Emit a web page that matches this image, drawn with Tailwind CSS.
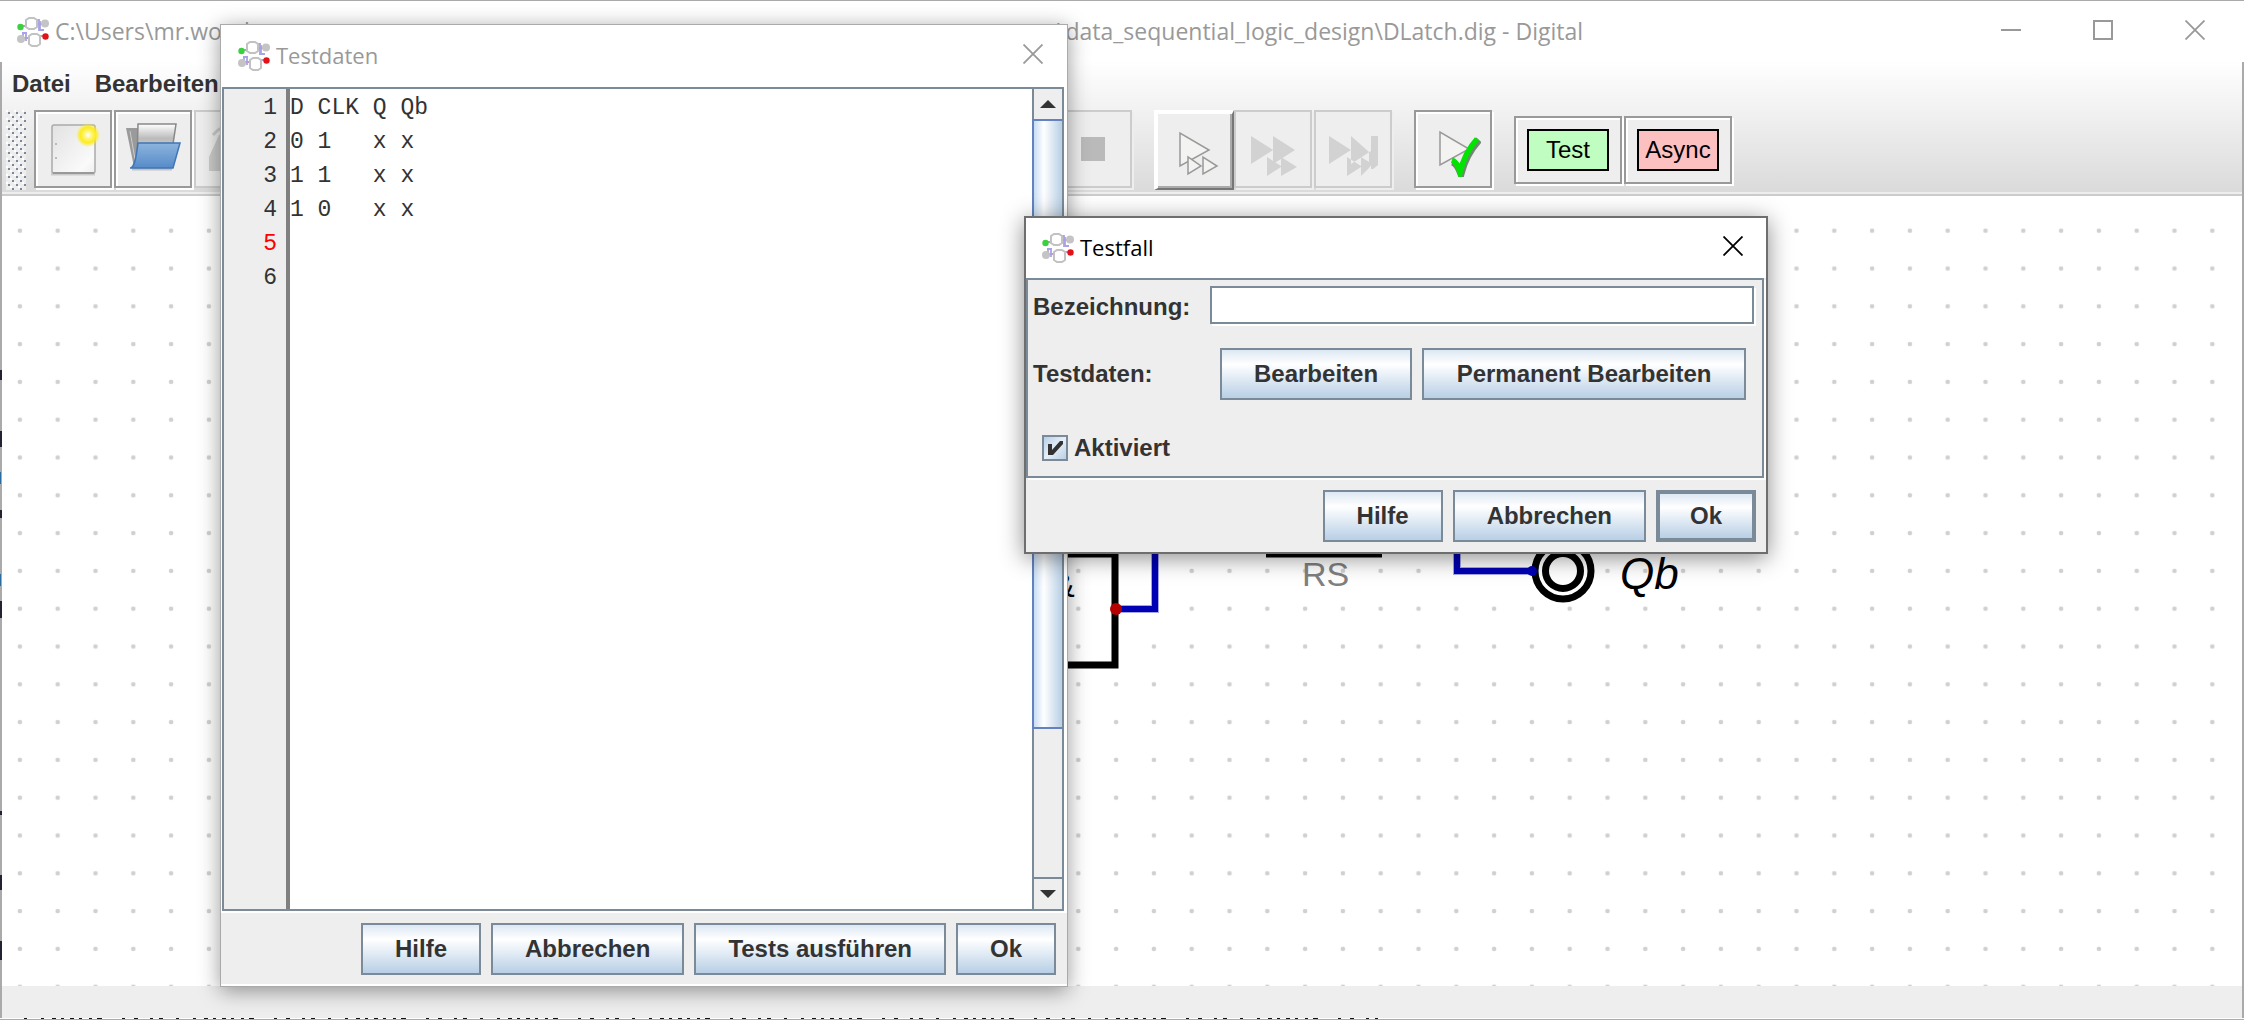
<!DOCTYPE html>
<html lang="de">
<head>
<meta charset="utf-8">
<title>DLatch.dig - Digital</title>
<script src="https://cdn.jsdelivr.net/npm/@tailwindcss/browser@4"></script>
</head>
<body class="relative flex h-screen flex-col overflow-hidden border-t border-[#aaa] bg-white font-['Liberation_Sans',sans-serif] text-2xl text-[#333]">

<svg class="hidden" aria-hidden="true">
  <defs>
    <symbol id="logo" viewBox="0 0 32 32">
      <path d="M5 10h8M21 8h5M5 22h7M20 20h8" stroke="#a77bb0" stroke-width="1.6" fill="none"/>
      <path d="M19 4h3v11M23 5v9h4M6 16v8M9 17v8M5 17h5" stroke="#a9a2e6" stroke-width="1.8" fill="none"/>
      <path d="M12 2h5l3 2v7l-3 2h-5l-3-2V4z" fill="#fff" stroke="#c2c2c2" stroke-width="2"/>
      <path d="M15 18h5l3 2v8l-3 2h-5l-3-2v-8z" fill="#fff" stroke="#c2c2c2" stroke-width="2"/>
      <circle cx="28" cy="7.500" r="4" fill="#c4c4c4"/>
      <circle cx="4" cy="23" r="4" fill="#c4c4c4"/>
      <circle cx="3.500" cy="11" r="3.200" fill="#3ad03f"/>
      <circle cx="28.500" cy="20.500" r="3.200" fill="#e0121a"/>
    </symbol>
    <symbol id="close" viewBox="0 0 20 20">
      <path d="M0.500 0.500l19 19M19.500 0.500l-19 19" stroke="currentColor" stroke-width="1.800" fill="none"/>
    </symbol>
  </defs>
</svg>

<!-- main window title bar -->
<header class="flex h-[61px] shrink-0 items-center pl-[17px] pr-[39px] font-['Open_Sans',sans-serif] text-[23px] text-[#999]">
  <svg class="mr-[6px] size-8 shrink-0"><use href="#logo"/></svg>
  <h1 class="flex flex-1 whitespace-nowrap"><span class="w-[1002px] overflow-hidden">C:\Users\mr.wood</span><span>\data_sequential_logic_design\DLatch.dig - Digital</span></h1>
  <div class="flex items-center gap-[72px] pb-1">
    <button aria-label="Minimieren" class="h-5"><svg class="h-5 w-5"><path d="M0 10h20" stroke="#999" stroke-width="2"/></svg></button>
    <button aria-label="Maximieren" class="h-5"><svg class="h-5 w-5"><path d="M1 1h18v18H1z" fill="none" stroke="#999" stroke-width="2"/></svg></button>
    <button aria-label="Schließen" class="h-5"><svg class="h-5 w-5"><use href="#close"/></svg></button>
  </div>
</header>

<div class="flex min-h-0 flex-1 flex-col border-x-2 border-[#aaa]">
  <div class="shrink-0 border-b-2 border-[#ccc] bg-linear-to-b from-white to-[#dadada]">
    <nav class="flex h-12 items-center gap-6 px-[10px] pb-1 font-bold">
      <button>Datei</button><button>Bearbeiten</button>
    </nav>
    <div class="flex h-[84px] items-start border-b-2 border-[#eee] pl-1" role="toolbar">
      <svg class="mr-2 h-20 w-5 shrink-0"><defs><pattern id="grip" width="8" height="8" patternUnits="userSpaceOnUse"><path d="M2 2h2v2H2zM6 6h2v2H6z" fill="#7a8a99"/><path d="M0 0h2v2H0zM4 4h2v2H4z" fill="#fff"/></pattern></defs><rect width="20" height="80" fill="#eee"/><rect width="20" height="80" fill="url(#grip)"/></svg>
      <button aria-label="Neu" class="mr-[2px] grid size-[78px] shrink-0 place-items-center border-2 border-[#999] bg-[#eee] shadow-[inset_2px_2px_0_#fff,2px_2px_0_#fff]">
        <svg class="size-14" viewBox="0 0 56 56"><defs><linearGradient id="pg" x2="1" y2="1"><stop stop-color="#e2e2e2"/><stop offset=".8" stop-color="#fafafa"/><stop offset="1" stop-color="#eee"/></linearGradient><radialGradient id="sun"><stop offset="0" stop-color="#fff"/><stop offset=".35" stop-color="#fff46b"/><stop offset=".65" stop-color="#fdec1e"/><stop offset="1" stop-color="#fdec1e" stop-opacity="0"/></radialGradient></defs>
          <path d="M6 53h44" stroke="#999" stroke-width="3" opacity=".4"/><rect x="7" y="4" width="43" height="48" rx="2" fill="url(#pg)" stroke="#aaa" stroke-width="1.500"/><path d="M8 52h41" stroke="#999" stroke-width="2"/><path d="M11 22v2M11 36v2" stroke="#bbb" stroke-width="2"/><circle cx="43" cy="14" r="12" fill="url(#sun)"/></svg>
      </button>
      <button aria-label="Öffnen" class="mr-[2px] grid size-[78px] shrink-0 place-items-center border-2 border-[#999] bg-[#eee] shadow-[inset_2px_2px_0_#fff,2px_2px_0_#fff]">
        <svg class="size-14" viewBox="0 0 56 56"><defs><linearGradient id="bl" x2="0" y2="1"><stop stop-color="#8db4de"/><stop offset="1" stop-color="#568bc9"/></linearGradient><linearGradient id="pp" x2="0" y2="1"><stop stop-color="#fff"/><stop offset=".4" stop-color="#bbb"/><stop offset="1" stop-color="#ddd"/></linearGradient></defs>
          <path d="M1 7h12l4 36-8 3z" fill="#9a9a9a"/><path d="M5 10l6 34" stroke="#ccc"/><path d="M13 3h38l-3 20-33 2-3 14z" fill="url(#pp)" stroke="#888" stroke-width="1.500"/><path d="M7 48h40" stroke="#999" stroke-width="3" opacity=".5"/><path d="M13 22h42l-7 25H5c4 0 6-8 8-25z" fill="url(#bl)" stroke="#3f76b5" stroke-width="1.500"/></svg>
      </button>
      <button disabled aria-label="Speichern" class="grid size-[78px] shrink-0 place-items-center border-2 border-[#ccc] bg-[#eee]">
        <svg class="size-14" viewBox="0 0 56 56"><path d="M4 50V36L14 14h28l10 22v14z" fill="#ccc"/><path d="M8 14Q16 4 28 4" stroke="#ccc" stroke-width="3" fill="none"/></svg>
      </button>
      <div class="w-[782px] shrink-0"></div>
      <button disabled aria-label="Stopp" class="mr-[22px] grid size-[78px] shrink-0 place-items-center border-2 border-[#ccc] bg-[#eee] shadow-[2px_2px_0_#eee]">
        <svg class="size-6"><rect width="24" height="24" fill="#bababa"/></svg>
      </button>
      <button aria-label="Gatterschritt" class="grid size-20 shrink-0 place-items-center border-2 border-t-4 border-l-4 border-t-white border-l-white border-r-[#777] border-b-[#777] bg-[#eee] shadow-[inset_-2px_-2px_0_#aaa]">
        <svg class="size-14" viewBox="0 0 56 56"><g fill="#f3f3f1" stroke="#999" stroke-width="1.500"><path d="M13 10v33l29-16z"/><path d="M21 34v17l13-8z"/><path d="M36 34v17l14-8z"/></g></svg>
      </button>
      <button disabled aria-label="Schritte" class="mr-[2px] grid size-[78px] shrink-0 place-items-center border-2 border-[#ccc] bg-[#eee] shadow-[2px_2px_0_#eee]">
        <svg class="size-14" viewBox="0 0 56 56"><path d="M6 15v28l22-14v14l22-14-22-14v14zM22 36v19l14-9v9l16-9-16-10v9z" fill="#d2d2d2"/></svg>
      </button>
      <button disabled aria-label="Bis zum Ende" class="mr-[22px] grid size-[78px] shrink-0 place-items-center border-2 border-[#ccc] bg-[#eee] shadow-[2px_2px_0_#eee]">
        <svg class="size-14" viewBox="0 0 56 56"><path d="M4 15v28l22-14v14l20-13v14l-2 3-8 8v-9l-14 9V36l14 9v-9l8 5V31L26 15v14zM46 15h7v29l-5 4h-2z" fill="#d2d2d2"/></svg>
      </button>
      <button aria-label="Tests starten" class="mr-[22px] grid size-[78px] shrink-0 place-items-center border-2 border-[#999] bg-[#eee] shadow-[inset_2px_2px_0_#fff,2px_2px_0_#fff]">
        <svg class="size-14" viewBox="0 0 56 56"><path d="M15 11v33l29-16z" fill="#f3f3f1" stroke="#999" stroke-width="1.500"/><path d="M27 41q5 1 9 12 5-20 18-34" fill="none" stroke="#456645" stroke-width="7" opacity=".75"/><path d="M27 39q5 2 8 12 5-20 17-33" fill="none" stroke="#00e400" stroke-width="5.500"/></svg>
      </button>
      <button class="mt-[6px] mr-[2px] grid h-[68px] w-[108px] shrink-0 place-items-center border-2 border-[#999] bg-[#eee] text-black shadow-[inset_2px_2px_0_#fff,2px_2px_0_#fff]"><span class="grid h-[42px] w-[82px] place-items-center border-2 border-black bg-[#c0fdc0]">Test</span></button>
      <button class="mt-[6px] grid h-[68px] w-[108px] shrink-0 place-items-center border-2 border-[#999] bg-[#eee] text-black shadow-[inset_2px_2px_0_#fff,2px_2px_0_#fff]"><span class="grid h-[42px] w-[82px] place-items-center border-2 border-black bg-[#fdc0c0]">Async</span></button>
    </div>
  </div>

  <!-- circuit canvas -->
  <main class="min-h-0 flex-1">
    <svg class="block h-full w-full" role="img" aria-label="Schaltung">
      <defs><pattern id="dots" x="-1" y="15.800" width="37.800" height="37.800" patternUnits="userSpaceOnUse"><circle cx="18.900" cy="18.900" r="2.300" fill="#d0d0d0"/></pattern></defs>
      <rect width="100%" height="100%" fill="url(#dots)"/>
      <g transform="translate(-2 -196)" fill="none">
        <path d="M1000 554H1115V665H1000M1266 554H1382" stroke="#000" stroke-width="7"/>
        <path d="M1116 609H1155V540M1457 540V571H1532" stroke="#a6a6e4" stroke-width="8"/>
        <path d="M1116 609H1155V540M1457 540V571H1532" stroke="#0000b4" stroke-width="6"/>
        <circle cx="1116" cy="609" r="6" fill="#b40000"/>
        <circle cx="1563" cy="571" r="28" fill="#fff" stroke="#000" stroke-width="7"/>
        <circle cx="1563" cy="571" r="17.500" stroke="#000" stroke-width="7"/>
        <circle cx="1532" cy="571" r="5" fill="#0000b4"/>
        <text x="1052" y="597" font-size="34" fill="#000">&amp;</text>
        <text x="1302" y="586" font-size="34" fill="#808080">RS</text>
        <text x="1620" y="589" font-size="44" font-style="italic" fill="#000">Qb</text>
      </g>
    </svg>
  </main>
  <footer class="h-8 shrink-0 bg-[#eee]"></footer>
</div>
<div class="h-[2px] shrink-0 border-b border-[#aaa]"><svg class="block h-px w-full"><path d="M24 .5H1378" stroke="#111" stroke-dasharray="3 14 3 8 4 5 3 6 4 5 3 7 3 5 5 20 3 9 4 12 3 6 4 13"/></svg></div>

<!-- edge of the window behind -->
<svg class="absolute top-0 left-0 h-full w-[2px]"><g fill="#222233"><path d="M0 369h2v10H0zM0 430h2v16H0zM0 509h2v8H0zM0 600h2v17H0zM0 810h2v4H0zM0 874h2v15H0zM0 940h2v19H0z"/><path d="M0 471h1v12H0zM0 573h1v12H0z" fill="#2a6ba0"/></g></svg>

<!-- test data dialog -->
<section aria-labelledby="t1" class="absolute top-[23px] left-[220px] flex h-[963px] w-[848px] flex-col border border-[#aaa] bg-white shadow-[0_4px_20px_rgb(0_0_0/0.4)]">
  <header class="flex h-[62px] shrink-0 items-center pr-[24px] pl-[17px] font-['Open_Sans',sans-serif] text-[22px] text-[#999]">
    <svg class="mr-[6px] size-8"><use href="#logo"/></svg><h2 id="t1" class="flex-1">Testdaten</h2>
    <button aria-label="Schließen" class="mb-1 h-5"><svg class="size-5"><use href="#close"/></svg></button>
  </header>
  <div class="mr-[3px] ml-px flex min-h-0 flex-1 border-2 border-[#7a8a99]">
    <ol class="w-[66px] border-r-4 border-[#808080] bg-[#eee] pt-[2px] pr-[9px] text-right font-['Liberation_Mono',monospace] text-[23px] leading-[34px]">
      <li>1</li><li>2</li><li>3</li><li>4</li><li class="text-[#f00]">5</li><li>6</li>
    </ol>
    <textarea aria-label="Testdaten" spellcheck="false" class="flex-1 resize-none overflow-hidden pt-[2px] font-['Liberation_Mono',monospace] text-[23px] leading-[34px] outline-none">D CLK Q Qb
0 1   x x
1 1   x x
1 0   x x
</textarea>
    <div class="flex w-[30px] flex-col border-l-2 border-[#7a8a99] bg-[#eee]">
      <button aria-label="Nach oben" class="grid h-[30px] place-items-center"><svg class="h-2 w-4"><path d="M8 0l8 8H0z" fill="#333"/></svg></button>
      <div class="-ml-[2px] h-[610px] border-2 border-r-0 border-[#6382bf] bg-linear-to-r from-[#c8ddf2] via-white via-35% to-[#b8cfe5]"></div>
      <div class="flex-1"></div>
      <button aria-label="Nach unten" class="grid h-8 place-items-center border-t-2 border-[#7a8a99]"><svg class="h-2 w-4"><path d="M0 0h16l-8 8z" fill="#333"/></svg></button>
    </div>
  </div>
  <div class="flex h-[75px] shrink-0 items-center justify-end gap-[10px] border-y-2 border-white bg-[#eee] pr-[11px] font-bold">
    <button class="h-[52px] border-2 border-[#7a8a99] bg-linear-to-b from-[#dde8f3] via-white via-30% to-[#b8cfe5] px-8">Hilfe</button>
    <button class="h-[52px] border-2 border-[#7a8a99] bg-linear-to-b from-[#dde8f3] via-white via-30% to-[#b8cfe5] px-8">Abbrechen</button>
    <button class="h-[52px] border-2 border-[#7a8a99] bg-linear-to-b from-[#dde8f3] via-white via-30% to-[#b8cfe5] px-8">Tests ausführen</button>
    <button class="h-[52px] border-2 border-[#7a8a99] bg-linear-to-b from-[#dde8f3] via-white via-30% to-[#b8cfe5] px-8">Ok</button>
  </div>
</section>

<!-- test case dialog -->
<section aria-labelledby="t2" class="absolute top-[215px] left-[1024px] flex h-[338px] w-[744px] flex-col border-2 border-[#6e6e6e] bg-[#eee] shadow-[0_4px_22px_rgb(0_0_0/0.45)]">
  <header class="flex h-[60px] shrink-0 items-center bg-white pr-[23px] pl-4 font-['Open_Sans',sans-serif] text-[22px] text-black">
    <svg class="mr-[6px] size-8"><use href="#logo"/></svg><h2 id="t2" class="flex-1">Testfall</h2>
    <button aria-label="Schließen" class="mb-1 h-5"><svg class="size-5"><use href="#close"/></svg></button>
  </header>
  <form class="mr-[2px] flex h-[200px] shrink-0 flex-col border-2 border-[#7a8a99] pr-2 pl-[5px] font-bold shadow-[2px_2px_0_#fff]">
    <div class="mt-[6px] flex h-[38px] items-center"><label for="bez" class="w-[177px] pt-1">Bezeichnung:</label><input id="bez" type="text" class="h-[38px] min-w-0 flex-1 border-2 border-[#7a8a99] bg-white px-1 font-normal shadow-[2px_2px_0_#fff] outline-none"></div>
    <div class="mt-6 flex items-center gap-[10px] pr-2"><span class="w-[177px]">Testdaten:</span>
      <button type="button" class="h-[52px] border-2 border-[#7a8a99] bg-linear-to-b from-[#dde8f3] via-white via-30% to-[#b8cfe5] px-8">Bearbeiten</button>
      <button type="button" class="h-[52px] flex-1 border-2 border-[#7a8a99] bg-linear-to-b from-[#dde8f3] via-white via-30% to-[#b8cfe5]">Permanent Bearbeiten</button>
    </div>
    <label class="mt-8 ml-[9px] flex items-center gap-[6px]">
      <span class="grid size-[26px]"><input type="checkbox" checked class="col-start-1 row-start-1 size-[26px] appearance-none border-2 border-[#7a8a99] bg-linear-to-br from-[#b8cfe5] via-[#e6eff8] to-[#b8cfe5]"><svg class="pointer-events-none col-start-1 row-start-1 size-[26px]"><path d="M6 9h4v6l8-9h3v3L11 20H6z" fill="#333"/></svg></span>Aktiviert</label>
  </form>
  <div class="flex flex-1 items-center justify-end gap-[10px] pt-[2px] pr-[10px] font-bold">
    <button class="h-[52px] border-2 border-[#7a8a99] bg-linear-to-b from-[#dde8f3] via-white via-30% to-[#b8cfe5] px-8">Hilfe</button>
    <button class="h-[52px] border-2 border-[#7a8a99] bg-linear-to-b from-[#dde8f3] via-white via-30% to-[#b8cfe5] px-8">Abbrechen</button>
    <button class="h-[52px] border-4 border-[#7a8a99] bg-linear-to-b from-[#dde8f3] via-white via-30% to-[#b8cfe5] px-[30px]">Ok</button>
  </div>
</section>
</body>
</html>
